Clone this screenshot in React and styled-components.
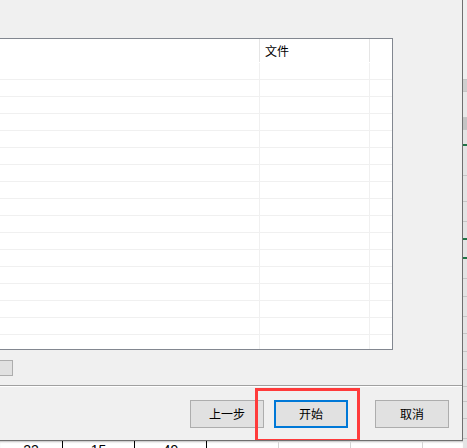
import styled, { createGlobalStyle } from "styled-components";

const Global = createGlobalStyle`
    html, body {
        margin: 0;
        padding: 0;
        background: #ffffff;
    }
    * {
        box-sizing: border-box;
    }
`

const Screen = styled.div`
    width: 467px;
    height: 448px;
    overflow: hidden;
    display: grid;
    grid-template-columns: 463px 4px;
    grid-template-rows: 441px 7px;
    font-family: "Noto Sans CJK SC", "Liberation Sans", sans-serif;
`

const Dialog = styled.div`
    grid-column: 1;
    grid-row: 1;
    background: #f0f0f0;
    border-right: 1px solid #6f6f6f;
    border-bottom: 1px solid #6f6f6f;
    display: flex;
    flex-direction: column;
    padding-top: 38px;
    overflow: hidden;
`

const ListBox = styled.div`
    margin-left: -10px;
    width: 403px;
    height: 312px;
    border: 1px solid #828790;
    background: #ffffff;
    overflow: hidden;
    flex-shrink: 0;
`

const Row = styled.div`
    display: grid;
    grid-template-columns: 269px 110px 1fr;
    height: ${p => p.$head ? 24 : 17}px;
    border-bottom: 1px solid ${p => p.$head ? "transparent" : "#f0f0f0"};

    & > div {
        border-right: 1px solid ${p => p.$head ? "#e5e5e5" : "#f0f0f0"};
        height: ${p => p.$head ? 23 : 17}px;
    }
    & > div:last-child {
        border-right: none;
    }
`

const HeadCell = styled.div`
    font-size: 12px;
    line-height: 24px;
    color: #000;
    padding-left: 5px;
`

const Cell = styled.div``

const Stub = styled.div`
    margin-top: 10px;
    margin-left: -20px;
    width: 33px;
    height: 16px;
    background: #e1e1e1;
    border: 1px solid #adadad;
    flex-shrink: 0;
`

const Separator = styled.div`
    margin-top: 9px;
    height: 2px;
    border-top: 1px solid #a0a0a0;
    border-bottom: 1px solid #ffffff;
    flex-shrink: 0;
`

const Buttons = styled.div`
    margin-top: 13px;
    padding-right: 13px;
    display: flex;
    justify-content: flex-end;
    align-items: center;
`

const Button = styled.button`
    width: 74px;
    height: 28px;
    margin-left: ${p => p.$gap || 0}px;
    background: #e1e1e1;
    border: ${p => p.$primary ? "2px solid #0078d7" : "1px solid #adadad"};
    font-family: "Noto Sans CJK SC", sans-serif;
    font-size: 12px;
    color: #000;
    padding: 0;
    line-height: 1;
`

const Highlight = styled.div`
    position: relative;
    margin-left: 10px;

    &::after {
        content: '';
        position: absolute;
        left: -19px;
        top: -12px;
        width: 99px;
        height: 48px;
        border: 3px solid #ff3b3b;
        pointer-events: none;
    }
`

const RightStrip = styled.div`
    grid-column: 2;
    grid-row: 1 / span 2;
    background: #e4e4e4;
    display: flex;
    flex-direction: column;
`

const StripRow = styled.div`
    height: ${p => p.$h}px;
    flex-shrink: 0;
    background: ${p => p.$bg || "transparent"};
    border-bottom: ${p => p.$green ? "2px solid #217346" : "1px solid #c6c6c6"};
`

const BottomStrip = styled.div`
    grid-column: 1;
    grid-row: 2;
    background: #ffffff;
    display: flex;
    overflow: hidden;
    box-shadow: inset 0 2px 2px -1px rgba(0, 0, 0, 0.25);
`

const SheetCell = styled.div`
    width: ${p => p.$w}px;
    flex-shrink: 0;
    border-right: 1px solid ${p => p.$dark ? "#000" : "#d4d4d4"};
    font-family: "Liberation Sans", sans-serif;
    font-size: 14px;
    line-height: 16px;
    padding-top: 1px;
    text-align: center;
    color: #000;
`

const stripRows = [
    { h: 80, bg: "#efefef" },
    { h: 12, bg: "#cfcfcf" },
    { h: 26, bg: "#e9e9e9" },
    { h: 12, bg: "#c4c4c4" },
    { h: 16, green: true },
    { h: 30 }, { h: 26 }, { h: 20 },
    { h: 18, green: true },
    { h: 19, green: true },
    { h: 20 }, { h: 18 }, { h: 20 }, { h: 17 }, { h: 18 },
    { h: 18 }, { h: 17 }, { h: 15 }, { h: 17 }, { h: 20 }, { h: 20 },
]

const sheetCells = [
    { w: 63, text: "22", dark: true },
    { w: 72, text: "15", dark: true },
    { w: 72, text: "49", dark: true },
    { w: 72 }, { w: 72 }, { w: 72 }, { w: 72 },
]

function App() {
    const rows = Array.from({ length: 18 })

    return (
        <>
            <Global />
            <Screen>
                <Dialog>
                    <ListBox>
                        <Row $head>
                            <HeadCell />
                            <HeadCell>文件</HeadCell>
                            <HeadCell />
                        </Row>
                        {rows.map((_, i) => (
                            <Row key={i}>
                                <Cell />
                                <Cell />
                                <Cell />
                            </Row>
                        ))}
                    </ListBox>
                    <Stub />
                    <Separator />
                    <Buttons>
                        <Button>上一步</Button>
                        <Highlight>
                            <Button $primary>开始</Button>
                        </Highlight>
                        <Button $gap={27}>取消</Button>
                    </Buttons>
                </Dialog>
                <RightStrip>
                    {stripRows.map((r, i) => (
                        <StripRow key={i} $h={r.h} $bg={r.bg} $green={r.green} />
                    ))}
                </RightStrip>
                <BottomStrip>
                    {sheetCells.map((c, i) => (
                        <SheetCell key={i} $w={c.w} $dark={c.dark}>{c.text}</SheetCell>
                    ))}
                </BottomStrip>
            </Screen>
        </>
    );
}

export default App;
